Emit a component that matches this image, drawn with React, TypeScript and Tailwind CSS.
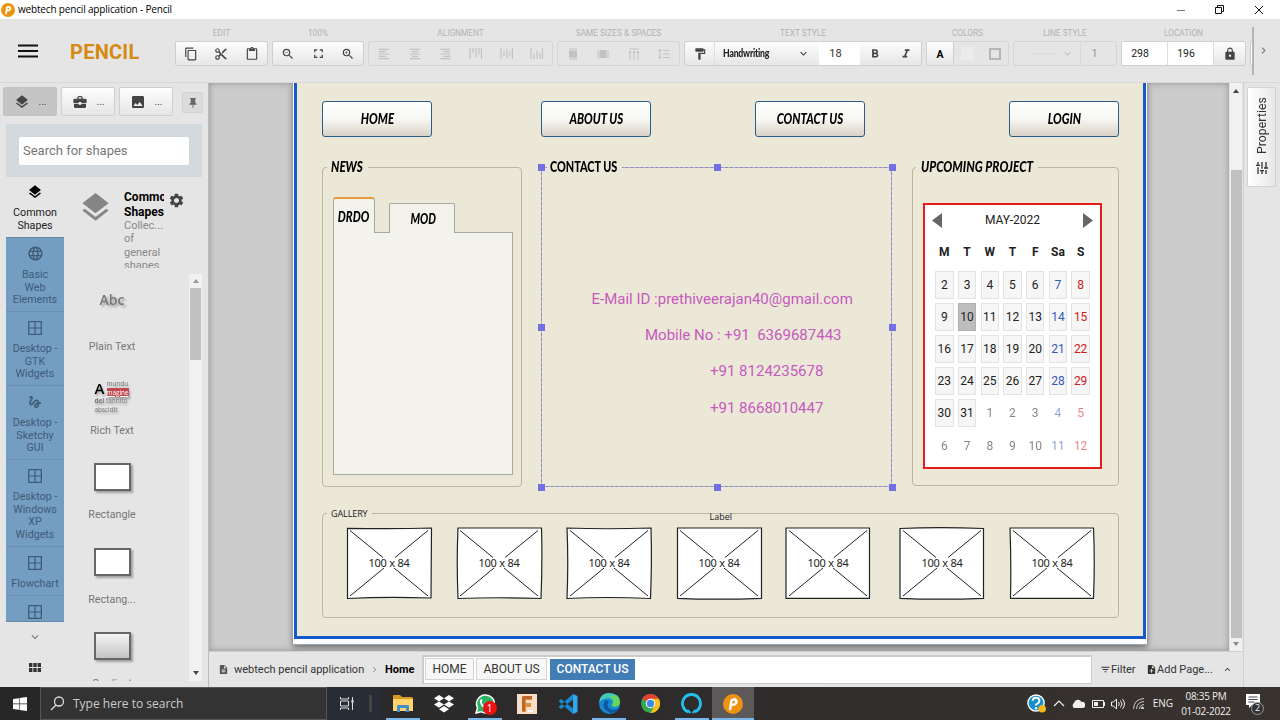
import React from 'react';
import {
  MdContentCopy, MdContentCut, MdContentPaste, MdZoomOut, MdZoomIn, MdFullscreen,
  MdFormatAlignLeft, MdFormatAlignCenter, MdFormatAlignRight, MdFormatPaint, MdFormatBold,
  MdFormatItalic, MdFormatLineSpacing, MdLock, MdLayers, MdBusinessCenter, MdImage,
  MdLanguage, MdGesture, MdSettings, MdKeyboardArrowDown, MdKeyboardArrowUp,
  MdKeyboardArrowRight, MdTune, MdFilterList, MdNoteAdd, MdDescription,
} from 'react-icons/md';

type Kids = { children?: React.ReactNode };

function PencilLogo({ className }: { className: string }) {
  return (
    <svg viewBox="0 0 20 20" className={className}>
      <circle cx="10" cy="10" r="10" fill="#ee930f" />
      <path d="M7.2 15.2 8.4 6.6Q10.5 4.6 12.8 5.9q1.6 1.8-.5 3.9-1.3 1.2-3.4.9" fill="none" stroke="#fff" strokeWidth="2.5" strokeLinecap="round" strokeLinejoin="round" />
    </svg>
  );
}

function TitleBar() {
  return (
    <div className="flex h-[19px] shrink-0 items-center bg-white">
      <PencilLogo className="ml-px size-[14px]" />
      <span className="ml-[3px] font-['Open_Sans','Noto_Sans',sans-serif] text-[10px] tracking-[-0.17px] text-black">webtech pencil application - Pencil</span>
      <div className="ml-auto flex items-center gap-[29px] pr-[16px]">
        <svg className="h-[10px] w-[10px]" viewBox="0 0 10 10"><path d="M1 5.500h8" stroke="#777" /></svg>
        <svg className="h-[10px] w-[10px]" viewBox="0 0 10 10" fill="none" stroke="#111"><path d="M.5 2.500h6v6h-6zM2.500 2.500v-2h6v6h-2" /></svg>
        <svg className="h-[10px] w-[10px]" viewBox="0 0 10 10" stroke="#111"><path d="m1 1 8 8M9 1 1 9" /></svg>
      </div>
    </div>
  );
}

function Group({ label, width, disabled, children }: Kids & { label: string; width: string; disabled?: boolean }) {
  return (
    <div className={`flex shrink-0 flex-col items-center ${width}`}>
      <div className="h-[22px] pt-[9px] text-[8.3px] leading-[11px] whitespace-nowrap text-[#b2b2b2]">{label}</div>
      <div className={`flex h-[25px] w-full items-stretch rounded-[2px] border ${disabled ? 'border-[#d5d5d5] bg-[#e5e5e5] text-[#c2c2c2]' : 'border-[#cfcfcf] bg-linear-to-b from-[#fdfdfd] to-[#e6e6e6] text-[#444]'}`}>
        {children}
      </div>
    </div>
  );
}

function Cell({ children, className = 'flex-1' }: Kids & { className?: string }) {
  return <div className={`flex items-center justify-center ${className}`}>{children}</div>;
}

function Bars({ y }: { y: 'top' | 'mid' | 'bot' }) {
  const d = { top: 'M1 1v11M4 1v5M7 1v9M10 1v6M12.500 1v11', mid: 'M1 1v11M4 4v5M7 2v9M10 4v5M12.500 1v11', bot: 'M1 1v11M4 7v5M7 4v8M10 6v6M12.500 1v11' }[y];
  return <svg className="size-[13px]" viewBox="0 0 13 13"><path d={d} stroke="currentColor" strokeWidth="1.2" /></svg>;
}

function Toolbar() {
  return (
    <div className="flex h-[64px] shrink-0 border-b border-[#d8d8d8] bg-[#e5e5e5]">
      <div className="flex w-[175px] shrink-0 items-center">
        <svg className="ml-[18px] h-[14px] w-[20px]" viewBox="0 0 20 14"><path d="M0 1.500h20M0 7h20M0 12.500h20" stroke="#111" strokeWidth="2.100" /></svg>
        <span className="mt-[2px] ml-[32px] text-[20px] leading-[24px] font-bold tracking-[0.25px] text-[#d58a12]">PENCIL</span>
      </div>
      <div className="flex w-[1079px] shrink-0 gap-[4px] overflow-hidden">
        <Group label="EDIT" width="w-[93px]">
          <Cell><MdContentCopy size={14} /></Cell><Cell><MdContentCut size={14} /></Cell><Cell><MdContentPaste size={14} /></Cell>
        </Group>
        <Group label="100%" width="w-[92px]">
          <Cell><MdZoomOut size={14} /></Cell><Cell><MdFullscreen size={15} /></Cell><Cell><MdZoomIn size={14} /></Cell>
        </Group>
        <Group label="ALIGNMENT" width="w-[185px]" disabled>
          <Cell><MdFormatAlignLeft size={14} /></Cell><Cell><MdFormatAlignCenter size={14} /></Cell><Cell><MdFormatAlignRight size={14} /></Cell>
          <Cell><Bars y="top" /></Cell><Cell><Bars y="mid" /></Cell><Cell><Bars y="bot" /></Cell>
        </Group>
        <Group label="SAME SIZES & SPACES" width="w-[123px]" disabled>
          <Cell><svg className="size-[12px]" viewBox="0 0 12 12"><path d="M2 1h8M2 11h8" stroke="currentColor" /><path d="M2 2.500h8v7H2z" fill="currentColor" /></svg></Cell>
          <Cell><svg className="size-[12px]" viewBox="0 0 12 12"><path d="M1 2v8M11 2v8" stroke="currentColor" /><path d="M2.500 2h7v8h-7z" fill="currentColor" /></svg></Cell>
          <Cell><svg className="size-[12px]" viewBox="0 0 12 12" fill="none" stroke="currentColor"><path d="M1 1h10M2 3v9M6 3v9M10 3v9M1 5l1-2 1 2M5 5l1-2 1 2M9 5l1-2 1 2" /></svg></Cell>
          <Cell><MdFormatLineSpacing size={14} /></Cell>
        </Group>
        <Group label="TEXT STYLE" width="w-[238px]">
          <Cell className="w-[30px] border-r border-[#ddd]"><MdFormatPaint size={14} /></Cell>
          <div className="flex w-[104px] items-center justify-between pr-[9px] pl-[8px]">
            <span className="w-[46px] origin-left scale-x-[.79] font-['Lato',sans-serif] text-[11px] font-black tracking-tight text-[#222]">Handwriting</span>
            <MdKeyboardArrowDown size={13} />
          </div>
          <Cell className="w-[41px] bg-white pr-[8px] text-[11px] text-[#333]"><span className="pt-px">18</span></Cell>
          <Cell><MdFormatBold size={14} /></Cell><Cell><MdFormatItalic size={14} /></Cell>
        </Group>
        <Group label="COLORS" width="w-[83px]" disabled>
          <Cell className="w-[27px] border-r border-[#ccc] bg-linear-to-b from-white to-[#e6e6e6] text-[10.500px] font-bold text-black"><span className="pt-[2px]">A</span></Cell>
          <Cell><span className="size-[13px] bg-[#ebebeb]" /></Cell>
          <Cell><span className="size-[12px] border-2 border-[#b5b5b5]" /></Cell>
        </Group>
        <Group label="LINE STYLE" width="w-[104px]" disabled>
          <Cell className="w-[67px] border-r border-[#d9d9d9] pl-[8px]"><span className="mr-[5px] h-px w-[27px] bg-[#dcdcdc]" /><MdKeyboardArrowDown size={13} /></Cell>
          <Cell className="w-[27px] text-[11px] text-[#999]"><span className="pt-px">1</span></Cell>
        </Group>
        <Group label="LOCATION" width="w-[125px]">
          <Cell className="w-[46px] border-r border-[#ddd] bg-white pr-[9px] text-[10.500px] text-[#222]">298</Cell>
          <Cell className="w-[46px] border-r border-[#ddd] bg-white pr-[9px] text-[10.500px] text-[#222]">196</Cell>
          <Cell><MdLock size={14} /></Cell>
        </Group>
        <div className="mt-[22px] h-[25px] w-[20px] shrink-0 rounded-[2px] border border-[#ccc] bg-white" />
      </div>
      <div className="mt-[8px] -ml-[2px] h-[48px] w-[2px] bg-[#b4b4b4]" />
      <MdKeyboardArrowRight className="mt-[25px] ml-[3px] text-[#777]" size={13} />
    </div>
  );
}

function Pane() {
  return <svg className="mt-px size-[14px]" viewBox="0 0 14 14" fill="none" stroke="currentColor"><path d="M.7.700h12.600v12.600H.7z" strokeWidth="1.300" /><path d="M7 1v12M1 7h12" strokeWidth="1.200" /></svg>;
}

function Category({ icon, lines, height }: { icon: React.ReactNode; lines: string[]; height: string }) {
  return (
    <div className={`flex shrink-0 flex-col items-center border-b border-[#6a8fb3] pt-[8px] text-[#3e5c78] ${height}`}>
      <div className="mb-[5px] flex h-[18px] shrink-0 items-start">{icon}</div>
      {lines.map((l) => <div key={l} className="text-[10.700px] leading-[12.600px] whitespace-nowrap">{l}</div>)}
    </div>
  );
}

function Shape({ label, children }: Kids & { label: string }) {
  return (
    <div className="flex h-[84.200px] shrink-0 flex-col items-center">
      <div className="flex h-[52px] items-center justify-center">{children}</div>
      <div className="mt-[14px] text-[10.700px] leading-[14px] text-[#777]">{label}</div>
    </div>
  );
}

function Sidebar() {
  return (
    <aside className="flex w-[209px] shrink-0 flex-col border-r border-[#bbb] bg-[#e5e5e5]">
      <div className="flex h-[41px] items-start gap-[4px] pt-[4px] pl-[3px]">
        {[MdLayers, MdBusinessCenter, MdImage].map((Icon, i) => (
          <div key={i} className={`flex h-[29px] w-[54px] items-center justify-center gap-[9px] rounded-[2px] border text-[#444] ${i === 0 ? 'border-[#c2c2c2] bg-[#c5c5c5]' : 'border-[#cfcfcf] bg-linear-to-b from-[#fdfdfd] to-[#e6e6e6]'}`}>
            <Icon size={16} /><span className="text-[10px]">...</span>
          </div>
        ))}
        <div className="mt-[5px] ml-[5px] flex size-[21px] items-center justify-center rounded-[2px] border border-[#d2d2d2] bg-[#dcdcdc]">
          <svg className="h-[10px] w-[8px]" viewBox="0 0 9 11"><path d="M1.500 0h6v1.200H7v3.800l1.500 1.500V7.500H5V11H4V7.500H.5V6.500L2 5V1.200h-.5z" fill="#666" /></svg>
        </div>
      </div>
      <div className="ml-[6px] h-[53px] w-[196px] bg-[#d2d9dc] px-[13px] py-[13px]">
        <div className="flex h-[28px] w-[170px] items-center rounded-[2px] bg-white pl-[4px] text-[13px] text-[#777]">Search for shapes</div>
      </div>
      <div className="flex min-h-0 flex-1 pl-[6px]">
        <div className="flex w-[58px] shrink-0 flex-col">
          <div className="flex h-[60px] flex-col items-center pt-[7px] text-center text-[10.700px] leading-[12.600px] text-[#222]">
            <MdLayers size={16} className="mb-[7px] shrink-0 text-black" />Common<br />Shapes
          </div>
          <div className="flex h-[385px] flex-col overflow-hidden border-y border-y-[#6288a9] bg-[#749dc2]">
            <Category icon={<MdLanguage size={17} className="-mt-px" />} lines={['Basic', 'Web', 'Elements']} height="h-[74px]" />
            <Category icon={<Pane />} lines={['Desktop -', 'GTK', 'Widgets']} height="h-[74px]" />
            <Category icon={<MdGesture size={16} />} lines={['Desktop -', 'Sketchy', 'GUI']} height="h-[74px]" />
            <Category icon={<Pane />} lines={['Desktop -', 'Windows', 'XP', 'Widgets']} height="h-[87px]" />
            <Category icon={<Pane />} lines={['Flowchart']} height="h-[49px]" />
            <Category icon={<Pane />} lines={[]} height="h-[49px]" />
          </div>
          <div className="flex flex-col items-center pt-[8px] text-[#777]">
            <MdKeyboardArrowDown size={14} />
            <svg className="mt-[19px] h-[9px] w-[12px]" viewBox="0 0 12 9" fill="#333"><path d="M0 0h3.400v4H0zM4.300 0h3.400v4H4.300zM8.600 0H12v4H8.600zM0 5h3.400v4H0zM4.300 5h3.400v4H4.300zM8.600 5H12v4H8.600z" /></svg>
          </div>
        </div>
        <div className="flex min-w-0 flex-1 flex-col">
          <div className="flex h-[97px] pt-[13px]">
            <MdLayers size={35} className="ml-[14px] shrink-0 text-[#858585]" />
            <div className="ml-[11px] h-[78px] w-[40px] shrink-0 overflow-hidden text-[12px] leading-[14.500px] font-bold text-black">
              Commo<br />Shapes
              <div className="text-[11px] leading-[13.300px] font-normal text-[#888]">Collec...<br />of<br />general<br />shapes</div>
            </div>
            <MdSettings size={17} className="mt-[2px] ml-[4px] shrink-0 text-[#444]" />
          </div>
          <div className="flex h-[407px] pr-[6px]">
            <div className="flex w-[96px] flex-col overflow-hidden">
              <Shape label="Plain Text"><span className="pb-[2px] font-['Open_Sans',sans-serif] text-[14px] font-semibold text-[#777] drop-shadow-[2px_2px_1px_rgba(0,0,0,.3)]">Abc</span></Shape>
              <Shape label="Rich Text">
                <div className="mt-[26px] h-[34px] w-[35px] font-['Open_Sans',sans-serif] text-[6.400px] leading-[8.500px] whitespace-nowrap text-[#777] drop-shadow-[1px_2px_1px_rgba(0,0,0,.3)]">
                  <div className="flex"><span className="w-[12px] shrink-0 text-[15px] leading-[17px] font-semibold text-black">A</span><span>mundu<br /><span className="bg-[#c14a50] text-white underline">magine</span></span></div>
                  <b>dei</b> tannito<br />abscidit
                </div>
              </Shape>
              <Shape label="Rectangle"><span className="mt-[18px] h-[28px] w-[37px] border-2 border-[#666] bg-white shadow-[2px_2px_2px_rgba(0,0,0,.3)]" /></Shape>
              <Shape label="Rectang..."><span className="mt-[18px] h-[28px] w-[37px] border-2 border-[#666] bg-white shadow-[2px_2px_2px_rgba(0,0,0,.3)]" /></Shape>
              <Shape label="Gradient"><span className="mt-[18px] h-[28px] w-[37px] border-2 border-[#666] bg-linear-to-b from-[#f5f5f5] to-[#c4c4c4] shadow-[2px_2px_2px_rgba(0,0,0,.3)]" /></Shape>
            </div>
            <div className="ml-auto flex w-[13px] flex-col items-center bg-[#f1f1f1]">
              <svg className="my-[5px] h-[4px] w-[6px] shrink-0" viewBox="0 0 6 4"><path d="M3 0l3 4H0z" fill="#999" /></svg>
              <div className="h-[72px] w-[11px] bg-[#c1c1c1]" />
              <svg className="mt-auto mb-[6px] h-[4px] w-[6px]" viewBox="0 0 6 4"><path d="M3 4 6 0H0z" fill="#444" /></svg>
            </div>
          </div>
        </div>
      </div>
    </aside>
  );
}

function Brush({ children, className = '' }: Kids & { className?: string }) {
  return <span className={`inline-block font-['Lato','Open_Sans',sans-serif] text-[15.500px] leading-[16px] font-black whitespace-nowrap text-black ${className}`}>{children}</span>;
}

function Legend({ children, className }: Kids & { className: string }) {
  return <div className={`absolute top-[75px] flex h-[20px] items-start bg-[#ebe8d8] ${className}`}>{children}</div>;
}

function NavButton({ label, x }: { label: string; x: string }) {
  return (
    <div className={`absolute top-[18px] flex h-[36px] w-[110px] items-center justify-center rounded-[3px] border border-[#2a5d87] bg-linear-to-b from-white via-[#f7f7f3] to-[#d9d3c8] pb-[2px] ${x}`}>
      <Brush className="scale-x-[.74] italic">{label}</Brush>
    </div>
  );
}

function Frame({ className }: { className: string }) {
  return <div className={`absolute rounded-[4px] border border-[#b9b6a5] ${className}`} />;
}

const WEEKS = [[2, 3, 4, 5, 6, 7, 8], [9, 10, 11, 12, 13, 14, 15], [16, 17, 18, 19, 20, 21, 22], [23, 24, 25, 26, 27, 28, 29], [30, 31, 1, 2, 3, 4, 5], [6, 7, 8, 9, 10, 11, 12]];

function Calendar() {
  return (
    <div className="absolute top-[120px] left-[714px] h-[266px] w-[179px] border-2 border-[#e51d1d] bg-white px-[7px] text-[12px] text-[#222]">
      <div className="flex h-[30px] items-center justify-between">
        <svg className="h-[15px] w-[10px]" viewBox="0 0 10 15"><path d="M10 0v15L0 7.500z" fill="#666" /></svg>
        <span>MAY-2022</span>
        <svg className="h-[15px] w-[10px]" viewBox="0 0 10 15"><path d="M0 0v15l10-7.500z" fill="#666" /></svg>
      </div>
      <div className="grid grid-cols-7 pr-px pl-px">
        {['M', 'T', 'W', 'T', 'F', 'Sa', 'S'].map((d, i) => <div key={i} className="flex h-[33.500px] items-center justify-center text-[12px] font-bold">{d}</div>)}
        {WEEKS.flatMap((w, r) => w.map((n, c) => {
          const out = r === 5 || (r === 4 && c > 1);
          return (
            <div key={`${r}-${c}`} className="flex h-[32.200px] items-center justify-center">
              <div className={`flex h-[28px] w-[18.500px] items-center justify-center border ${out ? 'border-transparent opacity-55' : n === 10 ? 'border-[#b0b0b0] bg-[#bdbdbd]' : 'border-[#e3e3e3] bg-[#f6f6f6]'} ${c === 5 ? 'text-[#3558bd]' : c === 6 ? 'text-[#cf2020]' : ''}`}>{n}</div>
            </div>
          );
        }))}
      </div>
    </div>
  );
}

const IMAGES = ['left-[137px]', 'left-[247px]', 'left-[357px]', 'left-[467px]', 'left-[576px]', 'left-[690px]', 'left-[800px]'];
const OUTLINES = [
  'M1.500 1.300Q50 2 85.500 1L85 71Q40 69.500 1.500 71.500z', 'M2 1H85.500Q86.500 35 85 71.500 40 70 2 71.500 .5 35 2 1z',
  'M1 1Q40 2.500 85 1 86 35 84.500 71.500 40 69.500 1 71.500 2.500 35 1 1z', 'M1.500 1H85.500V71.300Q40 73 1.500 71.300z',
  'M1 1H84.500V71.300H1z', 'M1 1.500Q40-.3 84.500 1.500V71.300Q40 73 1 71.300z', 'M1 1H84.500Q86 35 84.500 71.300H1.500Q2.300 35 1 1z',
];

function Placeholder({ x, outline }: { x: string; outline: string }) {
  return (
    <div className={`absolute top-[444px] flex h-[73px] w-[87px] items-center justify-center ${x}`}>
      <svg className="absolute inset-0 h-[73px] w-[87px]" viewBox="0 0 87 73" stroke="#222">
        <path d={outline} fill="#fff" strokeWidth="1.200" />
        <path d="m4 3.500 33 27M82 3.500l-33 27M4 69l34-28M82 69 48 41" strokeWidth="1" />
      </svg>
      <span className="relative pr-px font-['Noto_Sans',sans-serif] text-[11px] tracking-[-0.25px] whitespace-nowrap text-[#222]">100 x 84</span>
    </div>
  );
}

const HANDLES = ['left-[329px] top-[81px]', 'left-[505px] top-[81px]', 'left-[680px] top-[81px]', 'left-[329px] top-[241px]', 'left-[680px] top-[241px]', 'left-[329px] top-[401px]', 'left-[505px] top-[401px]', 'left-[680px] top-[401px]'];

function Canvas() {
  return (
    <div className="relative min-w-0 flex-1 overflow-hidden bg-[#cbcbcb] shadow-[inset_0_0_6px_rgba(0,0,0,.3)]">
      <div className="absolute top-0 left-[84px] h-[562px] w-[854px] border-b border-[#9ba9b5] bg-white shadow-[0_2px_6px_rgba(0,0,0,.5)]">
        <div className="ml-[1px] h-[556px] w-[852px] border-x-[3px] border-b-[3px] border-[#1659cb] bg-[#ebe8d8]" />
      </div>
      <NavButton label="HOME" x="left-[113px]" />
      <NavButton label="ABOUT US" x="left-[332px]" />
      <NavButton label="CONTACT US" x="left-[546px]" />
      <NavButton label="LOGIN" x="left-[800px]" />

      <Frame className="top-[84px] left-[113px] h-[320px] w-[200px]" />
      <Legend className="left-[118px] w-[41px] pl-[4px]"><Brush className="origin-left scale-x-[.75] italic">NEWS</Brush></Legend>
      <div className="absolute top-[149px] left-[124px] h-[243px] w-[180px] border border-[#a3aaa4] bg-[#f3f2ec]" />
      <div className="absolute top-[120px] left-[180px] flex h-[30px] w-[66px] items-center justify-center rounded-t-[2px] border border-b-0 border-[#a3aaa4] bg-[#f3f2ea] pb-[1px] pl-[3px]"><Brush className="scale-x-[.7] italic">MOD</Brush></div>
      <div className="absolute top-[114px] left-[124px] flex h-[36px] w-[42px] items-center justify-center rounded-t-[3px] border border-t-2 border-b-0 border-[#a3aaa4] border-t-[#e69a3a] bg-[#f3f2ec] pb-[1px]"><Brush className="scale-x-[.73] italic">DRDO</Brush></div>

      <div className="absolute top-[84px] left-[332px] h-[320px] w-[351px] border border-[#bbb8c2] after:absolute after:-inset-px after:border after:border-dashed after:border-[#8c8ac4]" />
      <Legend className="left-[338px] w-[75px] pl-[3px]"><Brush className="w-[70px] origin-left scale-x-[.7]">CONTACT US</Brush></Legend>
      {HANDLES.map((h) => <div key={h} className={`absolute size-[7px] bg-[#7270e2] ${h}`} />)}
      <div className="absolute top-[206px] left-[382.500px] text-[15px] leading-[20px] whitespace-pre text-[#c75abd]">E-Mail ID :prethiveerajan40@gmail.com</div>
      <div className="absolute top-[242px] left-[436px] text-[15px] leading-[20px] whitespace-pre text-[#c75abd]">Mobile No : +91  6369687443</div>
      <div className="absolute top-[278px] left-[501px] text-[15px] leading-[20px] text-[#c75abd]">+91 8124235678</div>
      <div className="absolute top-[315px] left-[501px] text-[15px] leading-[20px] text-[#c75abd]">+91 8668010447</div>

      <Frame className="top-[84px] left-[703px] h-[319px] w-[207px]" />
      <Legend className="left-[707px] w-[122px] pl-[5px]"><Brush className="w-[110px] origin-left scale-x-[.765] italic">UPCOMING PROJECT</Brush></Legend>
      <Calendar />

      <Frame className="top-[430px] left-[113px] h-[105px] w-[797px]" />
      <div className="absolute top-[424px] left-[118px] w-[45px] bg-[#ebe8d8] pl-[4px] font-['Open_Sans',sans-serif] text-[9px] leading-[14px] tracking-[-0.1px] text-[#222]">GALLERY</div>
      <div className="absolute top-[427px] left-[500.500px] font-['Open_Sans',sans-serif] text-[9px] leading-[14px] text-[#222]">Label</div>
      {IMAGES.map((x, i) => <Placeholder key={x} x={x} outline={OUTLINES[i]} />)}
    </div>
  );
}

function CanvasScrollbar() {
  return (
    <div className="flex w-[14px] shrink-0 flex-col items-center border-x border-[#e2e2e2] bg-[#f1f1f1]">
      <svg className="mt-[6px] h-[4px] w-[6px] shrink-0" viewBox="0 0 6 4"><path d="M3 0l3 4H0z" fill="#444" /></svg>
      <div className="mt-[77px] h-[468px] w-[11px] shrink-0 bg-[#c1c1c1]" />
      <svg className="mt-[4px] h-[4px] w-[6px]" viewBox="0 0 6 4"><path d="M3 4 6 0H0z" fill="#888" /></svg>
    </div>
  );
}

function PageBar() {
  return (
    <div className="flex h-[36px] shrink-0 items-center border-t border-[#d0d0d0] bg-[#e5e5e5] text-[11px] whitespace-nowrap text-[#333]">
      <MdDescription size={11} className="ml-[9px] text-[#555]" />
      <span className="ml-[5px] w-[130px] pt-[2px]">webtech pencil application</span>
      <MdKeyboardArrowRight size={11} className="ml-[5px] text-[#999]" />
      <span className="ml-[5px] w-[37px] pt-[2px] font-bold text-black">Home</span>
      <div className="flex h-[29px] w-[670px] shrink-0 items-center gap-[2px] border-2 border-r border-b border-[#ccc] bg-white pb-[2px] pl-[1px] text-[12px]">
        <div className="flex h-[22px] w-[49px] items-center justify-center border border-[#d5d5d5] bg-[#f7f7f7]">HOME</div>
        <div className="flex h-[22px] w-[71px] items-center justify-center border border-[#d5d5d5] bg-[#f7f7f7]">ABOUT US</div>
        <div className="ml-[1px] flex h-[21px] w-[85px] items-center justify-center bg-[#427db5] font-medium text-white">CONTACT US</div>
      </div>
      <MdFilterList size={11} className="ml-[8px]" /><span className="w-[26px] pt-[2px]">Filter</span>
      <MdNoteAdd size={11} className="ml-[9px]" /><span className="w-[56px] pt-[2px]">Add Page...</span>
      <MdKeyboardArrowUp size={11} className="ml-[9px]" />
    </div>
  );
}

function Task({ active, hot, children }: Kids & { active?: boolean; hot?: boolean }) {
  return (
    <div className={`relative flex h-full w-[41.300px] shrink-0 items-center justify-center ${hot ? 'bg-[#5d5959]' : ''}`}>
      {children}
      {active && <div className={`absolute bottom-0 h-[2px] bg-[#79b7ea] ${hot ? 'w-full' : 'w-[34px]'}`} />}
    </div>
  );
}

function Taskbar() {
  return (
    <div className="flex h-[33px] shrink-0 items-center bg-linear-to-r from-[#282727] via-[#2d2b2c] to-[#39332f] font-['Open_Sans','Noto_Sans',sans-serif] text-[#eee]">
      <div className="flex w-[40px] justify-center"><svg className="size-[14px]" viewBox="0 0 14 14"><path d="M0 2l6-.8v5.400H0zM6.600 1.100 14 0v6.600H6.600zM0 7.300h6v5.400L0 12zM6.600 7.300H14V14l-7.400-1.100z" fill="#fff" /></svg></div>
      <div className="flex h-full w-[287px] items-center border border-[#555] bg-[#333] pl-[9px]">
        <svg className="size-[15px]" viewBox="0 0 15 15" fill="none" stroke="#ddd" strokeWidth="1.300"><circle cx="9" cy="5.500" r="4.500" /><path d="m6 9-5 5" /></svg>
        <span className="ml-[8px] text-[12px] text-[#ccc]">Type here to search</span>
      </div>
      <div className="flex h-full w-[55px] items-center bg-[#272c35] pl-[13px]">
        <svg className="h-[13px] w-[14px]" viewBox="0 0 14 13" fill="none" stroke="#ddd"><path d="M.5 0v2h8V0M.5 4h8v5h-8zM.5 13v-2h8v2M12.500 0v13" /><path d="M12.500 3v3" strokeWidth="2" /></svg>
        <div className="ml-[15px] h-[17px] w-[3px] bg-[#444]" />
      </div>
      <Task active><svg className="h-[17px] w-[20px]" viewBox="0 0 20 17"><path d="M0 1q0-1 1-1h6l2 2h10l1 1v13H0z" fill="#d99a23" /><path d="M0 4h20v12H0z" fill="#ffd568" /><path d="M4 17v-6q0-1 1-1h10q1 0 1 1v6h-3v-4H7v4z" fill="#3e8ed0" /></svg></Task>
      <Task><svg className="h-[18px] w-[20px]" viewBox="0 0 20 18" fill="#fff"><path d="m5 0 5 3.200-5 3.200-5-3.200zM15 0l5 3.200-5 3.200-5-3.200zM5 6.400l5 3.200-5 3.200-5-3.200zM15 6.400l5 3.200-5 3.200-5-3.200zM10 11l5 3.300-5 3.200-5-3.200z" /></svg></Task>
      <Task active>
        <svg className="h-[20px] w-[20px]" viewBox="0 0 20 20"><path d="M1 19 2.500 14A9 9 0 1 1 6 17.700z" fill="#29b463" stroke="#fff" strokeWidth="1.500" /><path d="M7 5.500Q5.500 6.500 6 9q2 5 7 5.500" fill="none" stroke="#fff" strokeWidth="2" /></svg>
        <span className="absolute top-[14px] left-[18px] flex size-[14px] items-center justify-center rounded-full bg-[#ed1111] text-[10px] text-white">1</span>
      </Task>
      <Task><svg className="size-[20px]" viewBox="0 0 20 20"><path d="M0 0h20v20H0z" fill="#f9dec7" /><path d="M5 2h10v4H9v3h5v4H9v5H5z" fill="#e38b3d" /><path d="M7 2h8v3H8v12H5V4z" fill="#bc6527" /><path d="M11 16h5v2h-5z" fill="#fff" /></svg></Task>
      <Task><svg className="size-[20px]" viewBox="0 0 20 20"><path d="M15 0v5.500L3 15l-2.500-2zM15 20v-5.500L3 5 .5 7z" fill="#168bd2" /><path d="m15 0 4.500 2v16L15 20z" fill="#34a8ed" /></svg></Task>
      <Task active><svg className="size-[21px]" viewBox="0 0 20 20"><circle cx="10" cy="10" r="10" fill="#1688cf" /><path d="M0 9Q1 0 10 0q10 1 10 8 0 5-6 5-3-1-1-3 1-4-4-5-5 0-9 4z" fill="#42c8b5" /><path d="M14 2q6 2 6 7 0 4-6 4-3-1-1-3 3-4-2-7z" fill="#67d65b" /><path d="M6 7q-5 8 5 12 5 0 8-4-9 3-11-3 0-3 2-4z" fill="#0f569e" /></svg></Task>
      <Task><svg className="size-[19px]" viewBox="0 0 20 20"><circle cx="10" cy="10" r="10" fill="#33a852" /><path d="M10 10 1.300 5A10 10 0 0 1 18.700 5z" fill="#e34133" /><path d="M10 5h8.700A10 10 0 0 1 10 20l4.300-7.500z" fill="#fbc116" /><circle cx="10" cy="10" r="5" fill="#fff" /><circle cx="10" cy="10" r="3.900" fill="#4285e8" /></svg></Task>
      <Task active><svg className="size-[21px]" viewBox="0 0 21 21"><path d="M7.500 19A9 9 0 1 1 13.500 19" fill="none" stroke="#23c2ee" strokeWidth="2.800" /><path d="m6.500 17 3 3M14.500 17l-3 3" stroke="#23c2ee" strokeWidth="1.800" /></svg></Task>
      <Task active hot><PencilLogo className="size-[20px]" /></Task>
      <div className="ml-auto flex h-full items-center pr-[12px]">
        <svg className="size-[19px]" viewBox="0 0 20 20"><circle cx="9.500" cy="9.500" r="8.500" fill="#168fcd" stroke="#fff" strokeWidth="1.500" /><path d="M6 7q0-3 3.500-3t3.500 3q0 2-3.500 4v1" fill="none" stroke="#fff" strokeWidth="2" /><circle cx="9.500" cy="15" r="1.300" fill="#fff" /><circle cx="16" cy="15.500" r="4" fill="#f5b91e" /></svg>
        <svg className="ml-[7px] h-[7px] w-[12px]" viewBox="0 0 12 7"><path d="m1 6 5-5 5 5" fill="none" stroke="#eee" strokeWidth="1.200" /></svg>
        <svg className="ml-[6px] h-[9px] w-[14px]" viewBox="0 0 14 9"><path d="M3 9a3 3 0 0 1 0-5 4 4 0 0 1 7.500-1A3 3 0 0 1 12 9z" fill="#eee" /></svg>
        <svg className="ml-[7px] h-[8px] w-[13px]" viewBox="0 0 13 8"><path d="M.5.500h11v7H.5zM12.500 2v4" fill="none" stroke="#eee" /><path d="M2 2h4v4H2z" fill="#eee" /></svg>
        <svg className="ml-[6px] h-[12px] w-[14px]" viewBox="0 0 14 12" fill="none" stroke="#eee"><path d="M.5 4h2l3-3v10l-3-3h-2zM7.500 4q1.500 2 0 4M9.500 2.500q3 3.500 0 7M11.500 1q4 5 0 10" /></svg>
        <svg className="ml-[8px] size-[11px]" viewBox="0 0 11 11" fill="none" stroke="#ccc"><path d="M.5 11Q1 1 11 .5M3.500 11Q4 4 11 3.500M6.500 11q0-4 4.500-4.500" /><circle cx="9.500" cy="10" r="1" fill="#fff" /></svg>
        <span className="ml-[9px] text-[10px]">ENG</span>
        <div className="ml-[7px] flex w-[52px] flex-col items-center text-[10px] leading-[15px] tracking-[-0.25px] whitespace-nowrap"><span>08:35 PM</span><span>01-02-2022</span></div>
        <div className="relative ml-[14px] h-[22px] w-[22px]">
          <svg className="size-[16px]" viewBox="0 0 16 16"><path d="M0 1h14v11H6l-3 3v-3H0z" fill="#fff" /><path d="M2.500 4h9M2.500 6.500h9M2.500 9h6" stroke="#444" /></svg>
          <span className="absolute top-[9px] left-[5px] flex size-[13px] items-center justify-center rounded-full border border-[#999] bg-[#333] text-[9px]">2</span>
        </div>
      </div>
    </div>
  );
}

export default function App() {
  return (
    <div className="flex h-[720px] w-[1280px] flex-col overflow-hidden bg-[#e5e5e5] font-['Roboto','Liberation_Sans',sans-serif]">
      <TitleBar />
      <Toolbar />
      <div className="flex min-h-0 flex-1">
        <Sidebar />
        <div className="flex w-[1034px] shrink-0 flex-col">
          <div className="flex min-h-0 flex-1"><Canvas /><CanvasScrollbar /></div>
          <PageBar />
        </div>
        <div className="flex-1 border-l border-[#d2d2d2] pt-[4px] pl-[3px]">
          <div className="flex h-[100px] w-[29px] flex-col items-center rounded-[2px] border border-[#d2d2d2] bg-linear-to-r from-white to-[#e7e7e7] pt-[9px] text-[#333]">
            <span className="rotate-180 text-[12.200px] leading-[14px] tracking-[0.1px] [writing-mode:vertical-rl]">Properties</span>
            <MdTune size={16} className="mt-[6px] -rotate-90 shrink-0" />
          </div>
        </div>
      </div>
      <Taskbar />
    </div>
  );
}
